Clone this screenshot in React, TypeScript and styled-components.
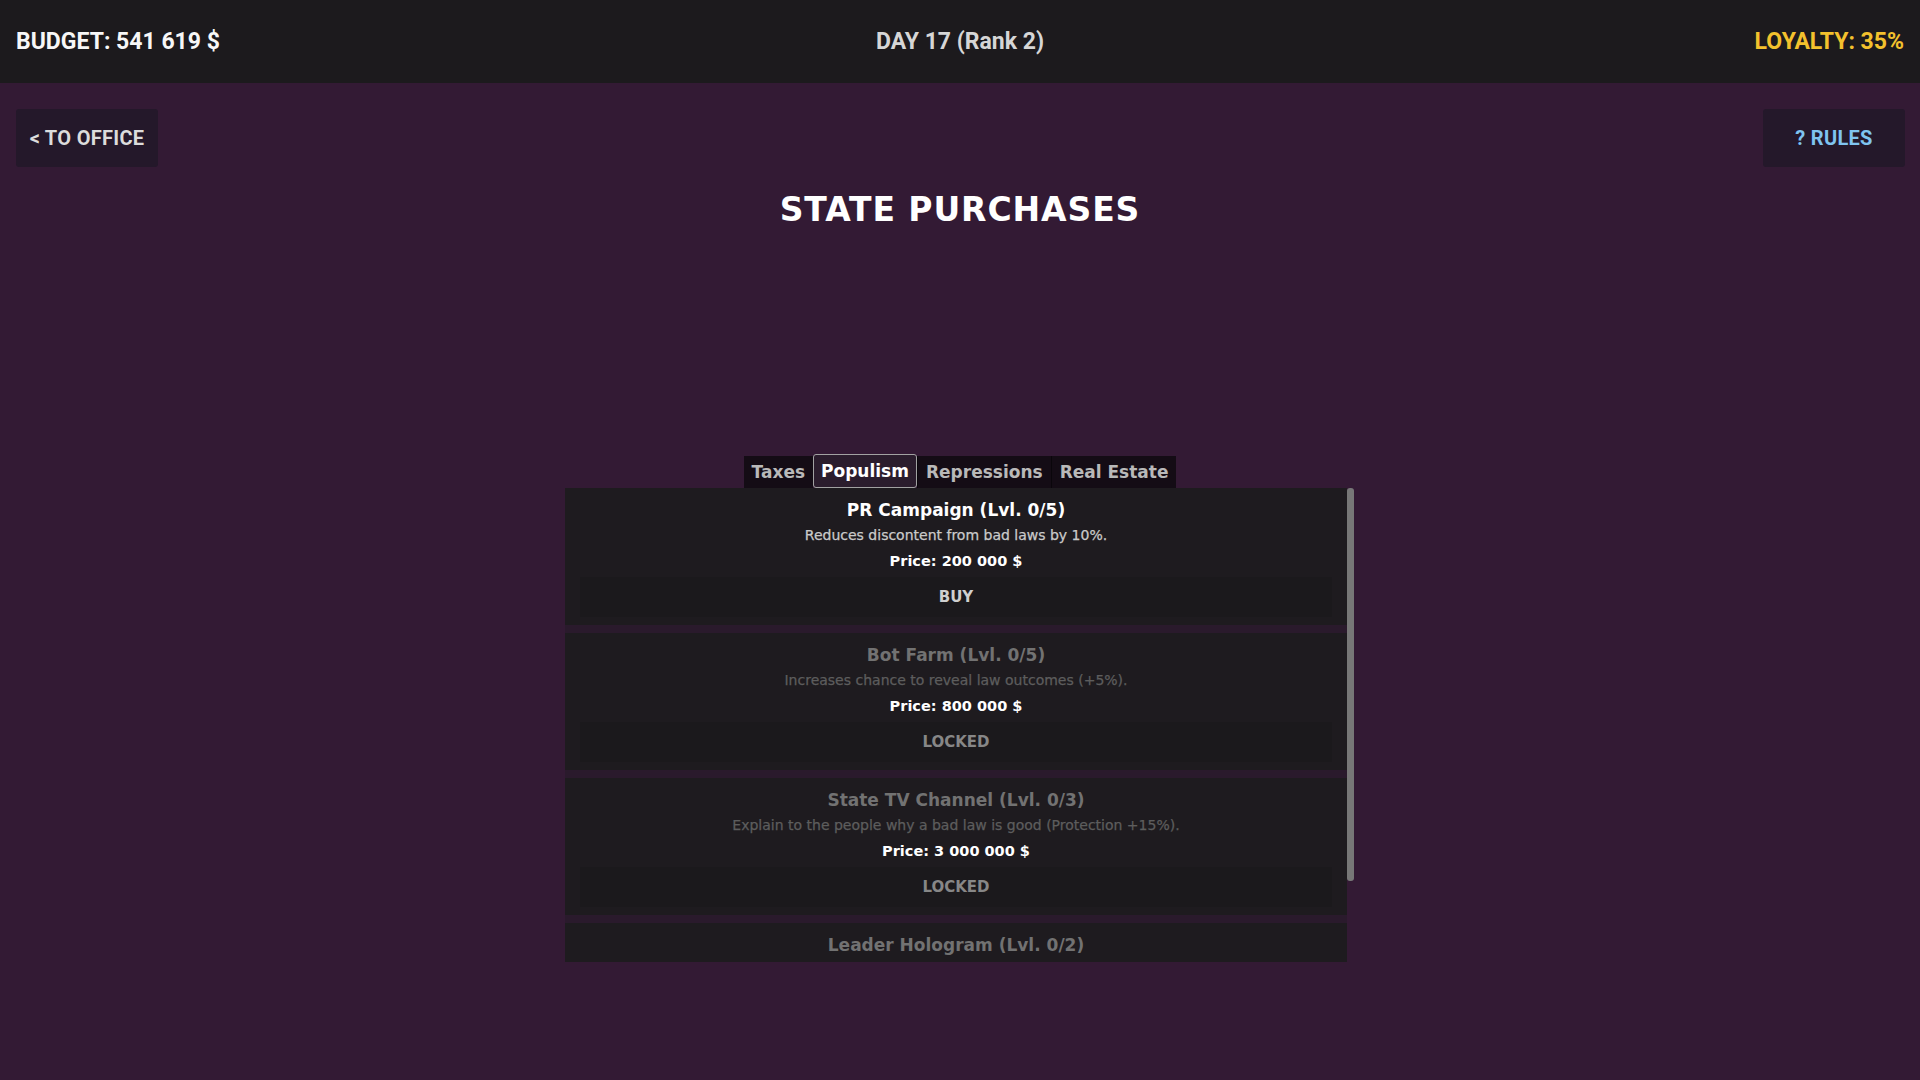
import React, { useState } from "react";
import styled, { createGlobalStyle } from "styled-components";

const GlobalStyle = createGlobalStyle`
  html, body {
    margin: 0;
    padding: 0;
    background: #331a34;
  }
  body {
    font-family: "DejaVu Sans", "Noto Sans", sans-serif;
    color: #fff;
  }
  #root {
    min-height: 100vh;
  }
`;

const Page = styled.div`
  min-height: 100vh;
  display: flex;
  flex-direction: column;
`;

const TopBar = styled.header`
  height: 83px;
  background: #1c1a1d;
  display: flex;
  align-items: center;
  justify-content: space-between;
  padding: 0 16px;
  font-family: Roboto, "Liberation Sans", sans-serif;
  font-weight: 700;
  font-size: 23px;
`;

const Stat = styled.div<{ $color: string; $width: number; $align: string }>`
  color: ${(p) => p.$color};
  width: ${(p) => p.$width}px;
  text-align: ${(p) => p.$align};
  white-space: nowrap;
`;

const NavRow = styled.nav`
  display: flex;
  justify-content: space-between;
  padding: 0 15px 0 16px;
  margin-top: 26px;
`;

const NavButton = styled.button<{ $color: string }>`
  width: 142px;
  height: 58px;
  border: none;
  border-radius: 3px;
  background: #24182a;
  color: ${(p) => p.$color};
  font-family: Roboto, "Liberation Sans", sans-serif;
  font-weight: 700;
  font-size: 20px;
  letter-spacing: 0.3px;
  cursor: pointer;
  padding: 0 12px;
`;

const Title = styled.h1`
  margin: 23px 0 0;
  text-align: center;
  font-size: 33px;
  line-height: 40px;
  letter-spacing: 0.9px;
  font-weight: 700;
  color: #fff;
`;

const Shop = styled.section`
  margin-top: 224px;
  display: flex;
  flex-direction: column;
  align-items: center;
`;

const Tabs = styled.div`
  display: flex;
  align-items: flex-end;
  height: 34px;
`;

const Tab = styled.button<{ $active?: boolean }>`
  height: ${(p) => (p.$active ? 34 : 32)}px;
  padding: 0 ${(p) => (p.$active ? 7 : 8)}px;
  margin: 0;
  border: ${(p) => (p.$active ? "1px solid #a2a2a2" : "none")};
  border-left: ${(p) => (p.$active ? "1px solid #a2a2a2" : "1px solid #0a060b")};
  border-radius: ${(p) => (p.$active ? "3px" : "0")};
  background: ${(p) => (p.$active ? "#2b1d2d" : "#140c15")};
  color: ${(p) => (p.$active ? "#ffffff" : "#b9b9b9")};
  font-family: "DejaVu Sans", sans-serif;
  font-weight: 700;
  font-size: 17px;
  cursor: pointer;
  &:first-child {
    border-left: none;
  }
`;

const Panel = styled.div`
  width: 790px;
  height: 474px;
  display: flex;
`;

const Viewport = styled.div`
  flex: 1;
  overflow: hidden;
`;

const ScrollTrack = styled.div`
  width: 8px;
  display: flex;
  flex-direction: column;
`;

const ScrollThumb = styled.div`
  width: 7px;
  height: 393px;
  background: #777;
  border-radius: 3px;
`;

const List = styled.div`
  display: flex;
  flex-direction: column;
  gap: 8px;
  background: #2a1a2c;
`;

const Item = styled.div`
  background: #1e1b1f;
  padding: 10px 15px 8px;
  display: flex;
  flex-direction: column;
  align-items: center;
  text-align: center;
`;

const ItemName = styled.div<{ $locked?: boolean }>`
  font-size: 17px;
  font-weight: 700;
  line-height: 24px;
  color: ${(p) => (p.$locked ? "#727272" : "#ffffff")};
`;

const ItemDesc = styled.div<{ $locked?: boolean }>`
  margin-top: 3px;
  font-size: 14px;
  line-height: 20px;
  -webkit-text-stroke: 0.25px currentColor;
  color: ${(p) => (p.$locked ? "#5d5d5d" : "#cacaca")};
`;

const Price = styled.div`
  margin-top: 6px;
  font-size: 14.5px;
  font-weight: 700;
  line-height: 20px;
  color: #fff;
`;

const BuyButton = styled.button<{ $locked?: boolean }>`
  margin-top: 6px;
  width: 100%;
  height: 40px;
  border: none;
  background: #1b191c;
  color: ${(p) => (p.$locked ? "#878787" : "#cfcfcf")};
  font-family: "DejaVu Sans", sans-serif;
  font-weight: 700;
  font-size: 15px;
  cursor: ${(p) => (p.$locked ? "default" : "pointer")};
`;

const tabs = ["Taxes", "Populism", "Repressions", "Real Estate"];

const items = [
  {
    name: "PR Campaign",
    lvl: "0/5",
    desc: "Reduces discontent from bad laws by 10%.",
    price: "200 000 $",
    locked: false,
  },
  {
    name: "Bot Farm",
    lvl: "0/5",
    desc: "Increases chance to reveal law outcomes (+5%).",
    price: "800 000 $",
    locked: true,
  },
  {
    name: "State TV Channel",
    lvl: "0/3",
    desc: "Explain to the people why a bad law is good (Protection +15%).",
    price: "3 000 000 $",
    locked: true,
  },
  {
    name: "Leader Hologram",
    lvl: "0/2",
    desc: "The leader appears at every rally at once (Protection +25%).",
    price: "10 000 000 $",
    locked: true,
  },
];

const App = () => {
  const [tab, setTab] = useState("Populism");

  return (
    <Page>
      <GlobalStyle />
      <TopBar>
        <Stat $color="#f7f7f7" $width={400} $align="left">
          BUDGET: 541 619 $
        </Stat>
        <Stat $color="#d6d6d6" $width={300} $align="center">
          DAY 17 (Rank 2)
        </Stat>
        <Stat $color="#f3c12d" $width={400} $align="right">
          LOYALTY: 35%
        </Stat>
      </TopBar>

      <NavRow>
        <NavButton $color="#dcdcdc">&lt; TO OFFICE</NavButton>
        <NavButton $color="#7fc4f0">? RULES</NavButton>
      </NavRow>

      <Title>STATE PURCHASES</Title>

      <Shop>
        <Tabs>
          {tabs.map((t) => (
            <Tab key={t} $active={t === tab} onClick={() => setTab(t)}>
              {t}
            </Tab>
          ))}
        </Tabs>
        <Panel>
          <Viewport>
            <List>
              {items.map((it) => (
                <Item key={it.name}>
                  <ItemName $locked={it.locked}>
                    {it.name} (Lvl. {it.lvl})
                  </ItemName>
                  <ItemDesc $locked={it.locked}>{it.desc}</ItemDesc>
                  <Price>Price: {it.price}</Price>
                  <BuyButton $locked={it.locked}>
                    {it.locked ? "LOCKED" : "BUY"}
                  </BuyButton>
                </Item>
              ))}
            </List>
          </Viewport>
          <ScrollTrack>
            <ScrollThumb />
          </ScrollTrack>
        </Panel>
      </Shop>
    </Page>
  );
};

export default App;
